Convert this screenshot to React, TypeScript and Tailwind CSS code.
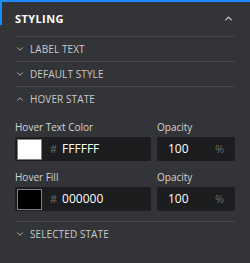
import { ChevronDown, ChevronUp } from 'lucide-react';

function SectionRow({ label, open }: { label: string; open?: boolean }) {
  return (
    <div className="flex items-center h-[24px] text-[10px] text-[#c9cacc] tracking-[0.1px]">
      {open ? (
        <ChevronUp size={10} strokeWidth={2} className="text-[#c9cacc] mr-[5px]" />
      ) : (
        <ChevronDown size={10} strokeWidth={2} className="text-[#c9cacc] mr-[5px]" />
      )}
      <span>{label}</span>
    </div>
  );
}

function ColorField({ label, hex, swatch }: { label: string; hex: string; swatch: string }) {
  return (
    <div className="flex gap-[6px]">
      <div className="flex flex-col w-[136px]">
        <div className="h-[19px] flex items-center text-[10px] text-[#d4d5d7]">{label}</div>
        <div className="h-[24px] bg-[#1c1d1f] rounded-[2px] flex items-center pl-[2px]">
          <div className={`w-[25px] h-[21px] border border-[#7d7e80] ${swatch}`} />
          <span className="ml-[8px] text-[11px] text-[#6d6e71]">#</span>
          <span className="ml-[5px] text-[12px] text-white">{hex}</span>
        </div>
      </div>
      <div className="flex flex-col w-[78px]">
        <div className="h-[19px] flex items-center text-[10px] text-[#d4d5d7]">Opacity</div>
        <div className="h-[24px] bg-[#1c1d1f] rounded-[2px] flex items-center px-[11px] justify-between">
          <span className="text-[12px] text-white">100</span>
          <span className="text-[11px] text-[#6d6e71]">%</span>
        </div>
      </div>
    </div>
  );
}

export default function App() {
  return (
    <div
      className="relative w-[250px] h-[263px] bg-[#333437] border-t-2 border-[#1a8cff] overflow-hidden"
      style={{ fontFamily: '"Open Sans", "Noto Sans", sans-serif' }}
    >
      <div className="absolute left-0 top-0 w-[2px] h-[23px] bg-[#1a8cff]" />
      <div className="px-[15px]">
        <div className="h-[35px] flex items-center justify-between border-b border-[#48494c]">
          <span className="text-[11px] font-bold tracking-[0.4px] text-white">STYLING</span>
          <ChevronUp size={11} strokeWidth={2.5} className="text-[#d0d1d3] mr-[1px] mb-[1px]" />
        </div>
        <div className="border-b border-[#48494c]">
          <SectionRow label="LABEL TEXT" />
        </div>
        <div className="border-b border-[#48494c]">
          <SectionRow label="DEFAULT STYLE" />
        </div>
        <div className="border-b border-[#48494c] pb-[10px]">
          <SectionRow label="HOVER STATE" open />
          <div className="flex flex-col gap-[7px] mt-[7px]">
            <ColorField label="Hover Text Color" hex="FFFFFF" swatch="bg-white" />
            <ColorField label="Hover Fill" hex="000000" swatch="bg-black" />
          </div>
        </div>
        <SectionRow label="SELECTED STATE" />
      </div>
    </div>
  );
}
